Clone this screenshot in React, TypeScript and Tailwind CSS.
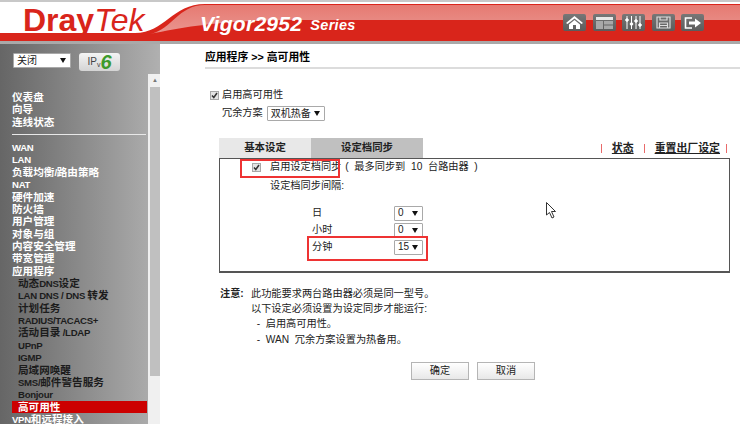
import React from "react";

const base = "font-['Liberation_Sans','Noto_Sans_CJK_SC',sans-serif]";

const topItems = ["仪表盘", "向导", "连线状态"];
const menuA = ["WAN", "LAN", "负载均衡/路由策略", "NAT", "硬件加速", "防火墙", "用户管理", "对象与组", "内容安全管理", "带宽管理", "应用程序"];
const subItems = ["动态DNS设定", "LAN DNS / DNS 转发", "计划任务", "RADIUS/TACACS+", "活动目录 /LDAP", "UPnP", "IGMP", "局域网唤醒", "SMS/邮件警告服务", "Bonjour"];

// menu latin runs are narrower than the cjk ones in this UI
const MenuText = ({ text }: { text: string }) => (
  <>
    {text.split(/([\x00-\x7f]+)/).map((part, i) =>
      /[\x00-\x7f]/.test(part) ? (
        <span key={i} className="text-[9.6px] tracking-[-0.3px]">{part}</span>
      ) : (
        <span key={i}>{part}</span>
      )
    )}
  </>
);

const Check = () => (
  <span className="w-[9px] h-[9px] bg-[#e4e4e4] border border-[#a8a8a8] flex items-center justify-center shrink-0">
    <svg width="7" height="7" viewBox="0 0 7 7" fill="none" stroke="#333" strokeWidth="1.5">
      <path d="M1 3.5 L2.8 5.5 L6 1" />
    </svg>
  </span>
);

const Select = ({ value, className }: { value: string; className: string }) => (
  <div className={`h-[15px] bg-white border border-[#a9a9a9] rounded-[1px] flex items-center justify-between pl-[3px] pr-[4px] text-[10px] text-[#222] ${className}`}>
    <span>{value}</span>
    <svg width="6" height="5" viewBox="0 0 6 5" fill="#111"><path d="M0 0 H6 L3 5 Z" /></svg>
  </div>
);

const HeaderBtn = ({ children }: { children: React.ReactNode }) => (
  <div className="w-[23px] h-[17px] rounded-[2px] bg-gradient-to-b from-[#777] to-[#5c5c5c] flex items-center justify-center">
    {children}
  </div>
);

const Header = () => (
  <div className="relative h-[44px] bg-white border-t-2 border-[#c8c8c8] overflow-hidden">
    <svg className="absolute inset-0" width="740" height="42" viewBox="0 0 740 42">
      <defs>
        <linearGradient id="gloss" x1="0" y1="0" x2="0" y2="1">
          <stop offset="0" stopColor="#e67a72" />
          <stop offset="1" stopColor="#ea9690" />
        </linearGradient>
      </defs>
      <path d="M0 31 H135 C165 31 172 2 205 2 H740 V40 H0 Z" fill="#d9251b" />
      <path d="M150 32 C172 28 178 3 205 3 H740 V18 H300 C225 18 190 24 150 32 Z" fill="url(#gloss)" />
      <rect x="0" y="39" width="740" height="3" fill="#a9a9a9" />
    </svg>
    <div className="relative flex items-center h-full">
      <div className="ml-[23px] w-[177px] -mt-[7px] text-[32px] leading-none font-bold text-[#d9251b]">
        Dray<span className="italic font-normal">Tek</span>
      </div>
      <div className="mt-[1px] text-[21px] leading-none font-bold italic text-white tracking-[0.3px]">
        Vigor2952
      </div>
      <div className="ml-[8px] mt-[4px] text-[14.5px] leading-none font-bold italic text-white tracking-[0.3px]">
        Series
      </div>
      <div className="ml-auto mr-[36px] -mt-[1px] flex gap-[6.5px]">
        <HeaderBtn>
          <svg width="17" height="13" viewBox="0 0 17 13" fill="white"><path d="M8.5 0 L17 7 L15.5 8 L8.5 2.5 L1.5 8 L0 7 Z M3 8.5 L8.5 4 L14 8.5 V13 H10 V9 H7 V13 H3 Z" /></svg>
        </HeaderBtn>
        <HeaderBtn>
          <svg width="17" height="12" viewBox="0 0 17 12"><path d="M0 0 H17 V3 H0 Z" fill="#e8e8e8" /><path d="M0 4 H7 V12 H0 Z M8 4 H17 V7.5 H8 Z M8 8.5 H17 V12 H8 Z" fill="#a8a8a8" /></svg>
        </HeaderBtn>
        <HeaderBtn>
          <svg width="17" height="13" viewBox="0 0 17 13" fill="white" stroke="white"><path d="M2 0 V13 M6.5 0 V13 M11 0 V13 M15 0 V13" strokeWidth="1" /><circle cx="2" cy="4" r="1.3" /><circle cx="6.5" cy="8" r="1.3" /><circle cx="11" cy="5" r="1.3" /><circle cx="15" cy="9" r="1.3" /></svg>
        </HeaderBtn>
        <HeaderBtn>
          <svg width="15" height="13" viewBox="0 0 15 13" fill="none" stroke="#ddd" strokeWidth="1.2"><path d="M1 1 H14 V12 H1 Z M4 1 V4 H11 V1 M3.5 7 H11.5 V12 H3.5 Z M3.5 9.5 H11.5" /></svg>
        </HeaderBtn>
        <HeaderBtn>
          <svg width="18" height="12" viewBox="0 0 18 12" fill="none"><path d="M8 1 H1.5 V11 H8" stroke="white" strokeWidth="1.6" /><path d="M5 4.5 H11 V1.5 L17 6 L11 10.5 V7.5 H5 Z" fill="white" /></svg>
        </HeaderBtn>
      </div>
    </div>
  </div>
);

const Sidebar = () => (
  <div className="w-[160px] h-[380px] shrink-0 relative bg-gradient-to-r from-[#666] to-[#b0b0b0] overflow-hidden">
    <div className="flex items-start gap-[8px] pl-[13px] pt-[9px] h-[30px]">
      <Select value="关闭" className="w-[58px]" />
      <div className="w-[41px] h-[18px] rounded-[3px] bg-gradient-to-b from-[#f4f4f4] to-[#d4d4d4] flex items-center justify-center text-[10px] text-[#444] leading-none">
        IP<span className="text-[7px] mt-[4px]">v</span>
        <span className="text-[20px] font-bold italic text-[#3c9a2c]">6</span>
      </div>
    </div>
    <div className="mr-[12px] h-[350px] pt-[17px] text-[10.6px] font-bold text-white">
      {topItems.map((t) => (
        <div key={t} className="h-[12.36px] leading-[12.36px] pl-[12px] whitespace-nowrap">{t}</div>
      ))}
      <div className="h-[1px] bg-[#e8e8e8] ml-[12px] mr-[2px] mt-[6px] mb-[6px]" />
      {menuA.map((t) => (
        <div key={t} className="h-[12.36px] leading-[12.36px] pl-[12px] whitespace-nowrap"><MenuText text={t} /></div>
      ))}
      {subItems.map((t) => (
        <div key={t} className="h-[12.36px] leading-[12.36px] pl-[18px] text-[#1c1c1c] whitespace-nowrap"><MenuText text={t} /></div>
      ))}
      <div className="h-[12.36px] leading-[12.36px] ml-[12px] mr-[1px] pl-[6px] bg-[#cc0000]">高可用性</div>
      <div className="h-[12.36px] leading-[12.36px] pl-[12px] whitespace-nowrap"><MenuText text="VPN和远程接入" /></div>
    </div>
    <div className="absolute left-[148px] top-[30px] w-[12px] h-[350px] bg-[#f0f0f0] pl-[2px]">
      <div className="h-[13px] flex items-center justify-center text-[6px] text-[#777]">▲</div>
      <div className="h-[289px] bg-[#c0c0c0]" />
    </div>
  </div>
);

const Main = () => (
  <div className="flex-1 min-w-0 pl-[45px] text-[10.2px] leading-none text-[#222]">
    <div className="h-[24px] pt-[4px] flex items-center font-bold text-[10.8px] text-black -mt-[1px]">应用程序 &gt;&gt; 高可用性</div>
    <div className="h-[2px] bg-[#dcdcdc]" />
    <div className="mt-[21px] ml-[5px] flex items-center gap-[3px] h-[10px]">
      <Check />
      <span>启用高可用性</span>
    </div>
    <div className="mt-[6px] ml-[17px] flex items-center gap-[4px]">
      <span>冗余方案</span>
      <Select value="双机热备" className="w-[58px]" />
    </div>
    <div className="mt-[17px] ml-[14px] mr-[10px]">
      <div className="flex items-stretch h-[20px] font-bold text-[10.4px] text-[#222]">
        <div className="w-[92px] bg-[#e8e8e8] flex items-center justify-center">基本设定</div>
        <div className="w-[112px] bg-[#c0c0c0] flex items-center justify-center">设定档同步</div>
        <div className="flex-1 flex items-center justify-end gap-[10px] pr-[3px] text-[10.9px]">
          <span className="w-[1px] h-[9px] bg-[#e96a6a]" />
          <span className="underline">状态</span>
          <span className="w-[1px] h-[9px] bg-[#e96a6a]" />
          <span className="underline">重置出厂设定</span>
          <span className="w-[1px] h-[9px] bg-[#e96a6a] -ml-[4px]" />
        </div>
      </div>
      <div className="relative h-[115px] border border-[#555] border-b-2 pt-[2px]">
        <div className="flex items-center h-[12px] ml-[32px] gap-[9px]">
          <Check />
          <span>启用设定档同步</span>
          <span className="-ml-[5px] whitespace-pre">(  最多同步到  10  台路由器  )</span>
        </div>
        <div className="mt-[8px] ml-[50px]">设定档同步间隔:</div>
        <div className="mt-[14px] ml-[92px] w-[111px] flex flex-col gap-[1px]">
          {[["日", "0"], ["小时", "0"], ["分钟", "15"]].map(([k, v]) => (
            <div key={k} className="flex items-center justify-between h-[16px]">
              <span>{k}</span>
              <Select value={v} className="w-[29px]" />
            </div>
          ))}
        </div>
        <div className="absolute left-[20px] top-0 w-[100px] h-[19px] border-2 border-[#ee3333]" />
        <div className="absolute left-[87px] top-[77px] w-[121px] h-[25px] border-2 border-[#ee3333]" />
      </div>
    </div>
    <div className="mt-[16px] ml-[15px] flex">
      <span className="w-[26px] font-bold">注意:</span>
      <div className="flex flex-col gap-[5px] ml-[5px]">
        <div>此功能要求两台路由器必须是同一型号。</div>
        <div>以下设定必须设置为设定同步才能运行:</div>
        <div className="whitespace-pre">  -  启用高可用性。</div>
        <div className="whitespace-pre">  -  WAN  冗余方案设置为热备用。</div>
      </div>
    </div>
    <div className="mt-[17px] ml-[206px] flex gap-[8px]">
      <div className="w-[58px] h-[18px] border border-[#b5b5b5] bg-gradient-to-b from-white to-[#e8e8e8] flex items-center justify-center">确定</div>
      <div className="w-[58px] h-[18px] border border-[#b5b5b5] bg-gradient-to-b from-white to-[#e8e8e8] flex items-center justify-center">取消</div>
    </div>
  </div>
);

export default function App() {
  return (
    <div className={`relative w-[740px] h-[424px] overflow-hidden bg-white ${base}`}>
      <Header />
      <div className="flex">
        <Sidebar />
        <Main />
      </div>
      {/* mouse cursor in the screenshot */}
      <svg className="absolute left-[546px] top-[202px]" width="11" height="17" viewBox="0 0 11 17" fill="white" stroke="#333">
        <path d="M0.5 0.5 V13 L3.5 10.5 L6 16 L8 15 L5.5 9.5 H9.5 Z" />
      </svg>
    </div>
  );
}
